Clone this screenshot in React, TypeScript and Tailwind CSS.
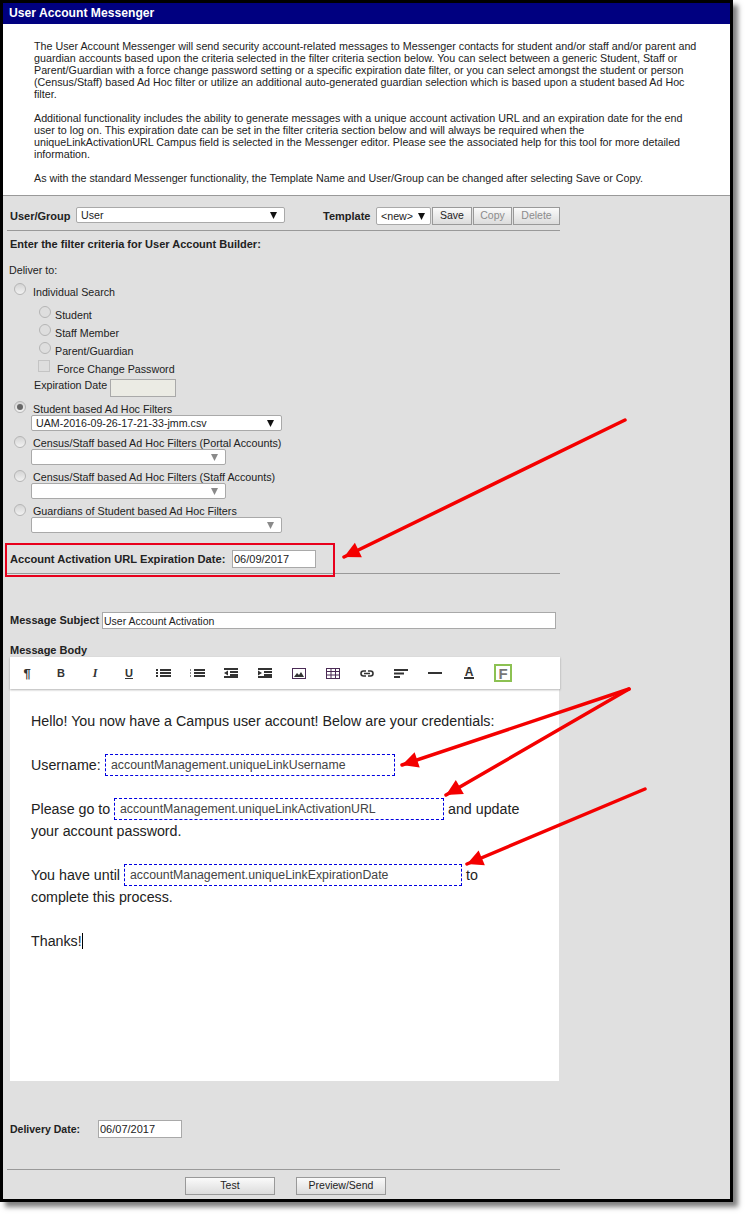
import { ReactNode } from 'react';

const Caret = ({ muted }: { muted?: boolean }) => (
  <svg width="7" height="7" viewBox="0 0 7 7" className="shrink-0">
    <path d="M0 0h7L3.5 7z" fill={muted ? '#8a8a8a' : '#111'} />
  </svg>
);

const SelectBox = ({ value, className, muted }: { value?: string; className: string; muted?: boolean }) => (
  <div className={`flex items-center justify-between bg-white border border-[#a9a9a9] rounded-[2px] pl-[4px] text-[10.67px] text-[#222] ${className}`}>
    <span className="truncate">{value}</span>
    <Caret muted={muted} />
  </div>
);

const Radio = ({ checked, small }: { checked?: boolean; small?: boolean }) => (
  <div className={`w-[12px] h-[12px] rounded-full border border-[#b5b5b5] flex items-center justify-center shrink-0 ${small ? 'bg-[#dedede]' : 'bg-gradient-to-b from-[#d4d4d4] to-[#f2f2f2]'}`}>
    {checked && <div className="w-[6px] h-[6px] rounded-full bg-[#666]" />}
  </div>
);

const SubOption = ({ label }: { label: string }) => (
  <div className="h-[18px] flex items-start pl-[36px]">
    <Radio small />
    <span className="ml-[4px] text-[10.7px] leading-[12px] mt-[3px] text-[#222]">{label}</span>
  </div>
);

const FilterOption = ({ label, checked, children }: { label: string; checked?: boolean; children: ReactNode }) => (
  <div className="mb-[5px]">
    <div className="h-[14px] flex items-start pl-[11px]">
      <Radio checked={checked} />
      <span className={`ml-[7px] text-[10.75px] leading-[12px] text-[#222] ${checked ? 'mt-[2px]' : 'mt-[1px]'}`}>{label}</span>
    </div>
    <div className="pl-[28px]">{children}</div>
  </div>
);

const ActionButton = ({ label, disabled, className }: { label: string; disabled?: boolean; className: string }) => (
  <div className={`h-[18px] flex items-center justify-center border border-[#999] bg-gradient-to-b from-[#fafafa] to-[#dcdcdc] text-[10.5px] ${disabled ? 'text-[#8c8c8c]' : 'text-[#222]'} ${className}`}>
    {label}
  </div>
);

const Field = ({ label, className }: { label: string; className: string }) => (
  <span className={`inline-block h-[22px] align-top border border-dashed border-[#0000e0] pl-[5px] text-[12.3px] leading-[21px] text-[#444] ${className}`}>
    {label}
  </span>
);

// 14 wide, 8 tall bars used by the list, indent and align buttons
const Bars = ({ children }: { children: ReactNode }) => (
  <svg width="15" height="10" viewBox="0 0 15 10" fill="#333">{children}</svg>
);

const tools = [
  <span className="font-bold text-[13px] leading-none">¶</span>,
  <span className="font-bold text-[11px] leading-none">B</span>,
  <span className="font-bold italic text-[12px] leading-none font-['Liberation_Serif',serif]">I</span>,
  <span className="font-bold text-[11px] leading-none underline">U</span>,
  <Bars>
    <rect x="0" y="1" width="2" height="2" /><rect x="0" y="4" width="2" height="2" /><rect x="0" y="7" width="2" height="2" />
    <rect x="4" y="1" width="11" height="2" /><rect x="4" y="4" width="11" height="2" /><rect x="4" y="7" width="11" height="2" />
  </Bars>,
  <Bars>
    <rect x="0" y="1" width="1" height="2" fill="#888" /><rect x="0" y="4" width="1" height="2" fill="#888" /><rect x="0" y="7" width="1" height="2" fill="#888" />
    <rect x="4" y="1" width="11" height="2" /><rect x="4" y="4" width="11" height="2" /><rect x="4" y="7" width="11" height="2" />
  </Bars>,
  <Bars>
    <rect x="0" y="0" width="14" height="2" /><rect x="6" y="3" width="8" height="2" /><rect x="6" y="6" width="8" height="2" /><rect x="0" y="8" width="14" height="2" />
    <path d="M4 2.500v5L0 5z" />
  </Bars>,
  <Bars>
    <rect x="0" y="0" width="14" height="2" /><rect x="6" y="3" width="8" height="2" /><rect x="6" y="6" width="8" height="2" /><rect x="0" y="8" width="14" height="2" />
    <path d="M0 2.500v5L4 5z" />
  </Bars>,
  <svg width="14" height="11" viewBox="0 0 14 11">
    <rect x="0.5" y="0.5" width="13" height="10" fill="none" stroke="#4a2a55" />
    <path d="M2 9l3-4 2 2 2-3 3 5z" fill="#333" />
  </svg>,
  <svg width="14" height="11" viewBox="0 0 14 11" fill="none" stroke="#4a2a55">
    <rect x="0.5" y="0.5" width="13" height="10" />
    <path d="M0 3.500h14M0 7h14M5 0v11M9.500 0v11" />
  </svg>,
  <svg width="14" height="7" viewBox="0 0 14 7" fill="none" stroke="#333" strokeWidth="1.6">
    <path d="M6 1H3.500a2.500 2.500 0 0 0 0 5H6M8 1h2.500a2.500 2.500 0 0 1 0 5H8M4 3.500h6" />
  </svg>,
  <svg width="15" height="9" viewBox="0 0 15 9" fill="#333">
    <rect x="0" y="0" width="14" height="2" /><rect x="0" y="3.500" width="10" height="2" /><rect x="0" y="7" width="6" height="2" />
  </svg>,
  <svg width="14" height="2" viewBox="0 0 14 2"><rect width="14" height="2" fill="#333" /></svg>,
  <span className="font-bold text-[12px] border-b-2 border-[#333] leading-[10px] px-px">A</span>,
  <span className="w-[18px] h-[18px] border-2 border-[#8cc152] flex items-center justify-center font-bold text-[15px] leading-none text-[#777]">F</span>,
];

const arrows = [
  { from: [625, 420], to: [344, 557] },
  { from: [629, 689], to: [402, 765] },
  { from: [629, 689], to: [446, 795] },
  { from: [645, 789], to: [467, 864] },
];

const arrowHead = (from: number[], to: number[]) => {
  const dx = from[0] - to[0];
  const dy = from[1] - to[1];
  const len = Math.hypot(dx, dy);
  const ux = dx / len;
  const uy = dy / len;
  const bx = to[0] + ux * 16;
  const by = to[1] + uy * 16;
  return `${to[0]},${to[1]} ${bx - uy * 8},${by + ux * 8} ${bx + uy * 8},${by - ux * 8}`;
};

const introParagraphs = [
  [
    'The User Account Messenger will send security account-related messages to Messenger contacts for student and/or staff and/or parent and',
    'guardian accounts based upon the criteria selected in the filter criteria section below. You can select between a generic Student, Staff or',
    'Parent/Guardian with a force change password setting or a specific expiration date filter, or you can select amongst the student or person',
    '(Census/Staff) based Ad Hoc filter or utilize an additional auto-generated guardian selection which is based upon a student based Ad Hoc',
    'filter.',
  ],
  [
    'Additional functionality includes the ability to generate messages with a unique account activation URL and an expiration date for the end',
    'user to log on. This expiration date can be set in the filter criteria section below and will always be required when the',
    'uniqueLinkActivationURL Campus field is selected in the Messenger editor. Please see the associated help for this tool for more detailed',
    'information.',
  ],
  ['As with the standard Messenger functionality, the Template Name and User/Group can be changed after selecting Save or Copy.'],
];

export default function App() {
  return (
    <div className="relative w-[748px] h-[1218px] bg-white overflow-hidden font-['Liberation_Sans',Arial,sans-serif]">
      <div className="w-[733px] border-[3px] border-black bg-[#e0e0e0] shadow-[5px_5px_5px_rgba(0,0,0,0.5)]">
        <div className="h-[21px] bg-[#000080] pl-[6px] flex items-center text-white font-bold text-[12.15px] pb-[1px]">
          User Account Messenger
        </div>

        <div className="h-[172px] bg-white border-b border-[#999] pl-[31px] pt-[16px] text-[10.73px] leading-[12px] text-[#222] whitespace-nowrap">
          {introParagraphs.map((lines, i) => (
            <div key={i} className="mb-[12px]">
              {lines.map((line) => <div key={line}>{line}</div>)}
            </div>
          ))}
        </div>

        <div className="w-[557px]">
          <div className="mt-[11px] h-[18px] flex items-center pl-[7px]">
            <span className="w-[66px] font-bold text-[11px] text-[#222]">User/Group</span>
            <SelectBox value="User" className="w-[209px] h-[16px] pr-[7px] -mt-[2px]" />
            <span className="ml-[38px] w-[53px] font-bold text-[11px] text-[#222]">Template</span>
            <SelectBox value="<new>" className="w-[55px] h-[18px] pr-[5px]" />
            <ActionButton label="Save" className="ml-[1px] w-[40px]" />
            <ActionButton label="Copy" disabled className="ml-[1px] w-[39px]" />
            <ActionButton label="Delete" disabled className="ml-[1px] w-[47px]" />
          </div>
          <div className="mt-[5px] ml-[4px] h-px bg-[#999]" />

          <div className="mt-[5px] h-[16px] pl-[7px] font-bold text-[11px] leading-[16px] text-[#222]">
            Enter the filter criteria for User Account Builder:
          </div>
          <div className="mt-[10px] h-[16px] pl-[6px] text-[10.7px] leading-[16px] text-[#222]">Deliver to:</div>

          <div className="mt-[5px] h-[16px] flex items-start pl-[11px]">
            <Radio />
            <span className="ml-[7px] text-[10.7px] leading-[12px] mt-[3px] text-[#222]">Individual Search</span>
          </div>

          <div className="mt-[7px]">
            <SubOption label="Student" />
            <SubOption label="Staff Member" />
            <SubOption label="Parent/Guardian" />
            <div className="h-[19px] flex items-start pl-[35px]">
              <div className="w-[12px] h-[12px] border border-[#c4c4c4] bg-[#dedede]" />
              <span className="ml-[7px] text-[10.7px] leading-[12px] mt-[3px] text-[#222]">Force Change Password</span>
            </div>
          </div>
          <div className="h-[18px] flex items-start pl-[31px]">
            <span className="w-[76px] text-[10.7px] leading-[12px] text-[#222]">Expiration Date</span>
            <div className="w-[66px] h-[18px] bg-[#ebebe4] border border-[#a9a9a9]" />
          </div>

          <div className="mt-[4px]">
            <FilterOption label="Student based Ad Hoc Filters" checked>
              <SelectBox value="UAM-2016-09-26-17-21-33-jmm.csv" className="w-[251px] h-[16px] pr-[7px]" />
            </FilterOption>
            <FilterOption label="Census/Staff based Ad Hoc Filters (Portal Accounts)">
              <SelectBox muted className="w-[195px] h-[16px] pr-[7px] -mt-px" />
            </FilterOption>
            <FilterOption label="Census/Staff based Ad Hoc Filters (Staff Accounts)">
              <SelectBox muted className="w-[195px] h-[16px] pr-[7px] -mt-px" />
            </FilterOption>
            <FilterOption label="Guardians of Student based Ad Hoc Filters">
              <SelectBox muted className="w-[251px] h-[16px] pr-[7px] -mt-px" />
            </FilterOption>
          </div>

          <div className="mt-[17px] h-[18px] flex items-center pl-[7px]">
            <span className="w-[222px] font-bold text-[11.15px] text-[#222]">Account Activation URL Expiration Date:</span>
            <div className="w-[84px] h-[18px] bg-white border border-[#a9a9a9] pl-[1px] text-[11px] leading-[16px] text-[#222]">06/09/2017</div>
          </div>
          <div className="mt-[5px] ml-[4px] h-px bg-[#999]" />

          <div className="mt-[38px] h-[17px] flex items-center pl-[7px]">
            <span className="w-[92px] font-bold text-[11px] text-[#222]">Message Subject</span>
            <div className="w-[454px] h-[17px] bg-white border border-[#a9a9a9] pl-[1px] text-[10.5px] leading-[16px] text-[#222]">User Account Activation</div>
          </div>
          <div className="mt-[14px] h-[14px] pl-[7px] font-bold text-[11px] leading-[14px] text-[#222]">Message Body</div>

          <div className="ml-[7px] h-[32px] bg-white shadow-[0_1px_2px_rgba(0,0,0,0.3)] flex items-center text-[#333] relative">
            {tools.map((icon, i) => (
              <div key={i} className="w-[34px] flex items-center justify-center">{icon}</div>
            ))}
          </div>
          <div className="ml-[7px] w-[549px] h-[392px] bg-white pl-[21px] pt-[21px] text-[14.25px] leading-[22px] text-[#222] whitespace-nowrap">
            <div>Hello! You now have a Campus user account! Below are your credentials:</div>
            <div className="mt-[22px] flex">
              <span className="w-[74px]">Username:</span>
              <Field label="accountManagement.uniqueLinkUsername" className="w-[290px]" />
            </div>
            <div className="mt-[22px] flex">
              <span className="w-[83px]">Please go to</span>
              <Field label="accountManagement.uniqueLinkActivationURL" className="w-[330px]" />
              <span className="ml-[4px]">and update</span>
            </div>
            <div>your account password.</div>
            <div className="mt-[22px] flex">
              <span className="w-[93px]">You have until</span>
              <Field label="accountManagement.uniqueLinkExpirationDate" className="w-[338px]" />
              <span className="ml-[4px]">to</span>
            </div>
            <div>complete this process.</div>
            <div className="mt-[22px] flex items-center">
              Thanks!<span className="w-px h-[16px] bg-black" />
            </div>
          </div>

          <div className="mt-[39px] h-[18px] flex items-center pl-[7px]">
            <span className="w-[88px] font-bold text-[10.5px] text-[#222] pt-px">Delivery Date:</span>
            <div className="w-[84px] h-[18px] bg-white border border-[#a9a9a9] pl-[1px] text-[11px] leading-[16px] text-[#222]">06/07/2017</div>
          </div>
          <div className="mt-[31px] ml-[4px] h-px bg-[#999]" />
          <div className="mt-[7px] mb-[4px] flex pl-[182px] gap-[21px]">
            <ActionButton label="Test" className="w-[90px]" />
            <ActionButton label="Preview/Send" className="w-[90px]" />
          </div>
        </div>
      </div>

      <div className="absolute left-[5px] top-[543px] w-[330px] h-[34px] border-2 border-[#e8001c]" />

      <svg width="748" height="1218" className="absolute inset-0 pointer-events-none">
        {arrows.map(({ from, to }, i) => (
          <g key={i}>
            <line x1={from[0]} y1={from[1]} x2={to[0]} y2={to[1]} stroke="#f40000" strokeWidth="3.5" strokeLinecap="round" />
            <polygon points={arrowHead(from, to)} fill="#f40000" />
          </g>
        ))}
      </svg>
    </div>
  );
}
